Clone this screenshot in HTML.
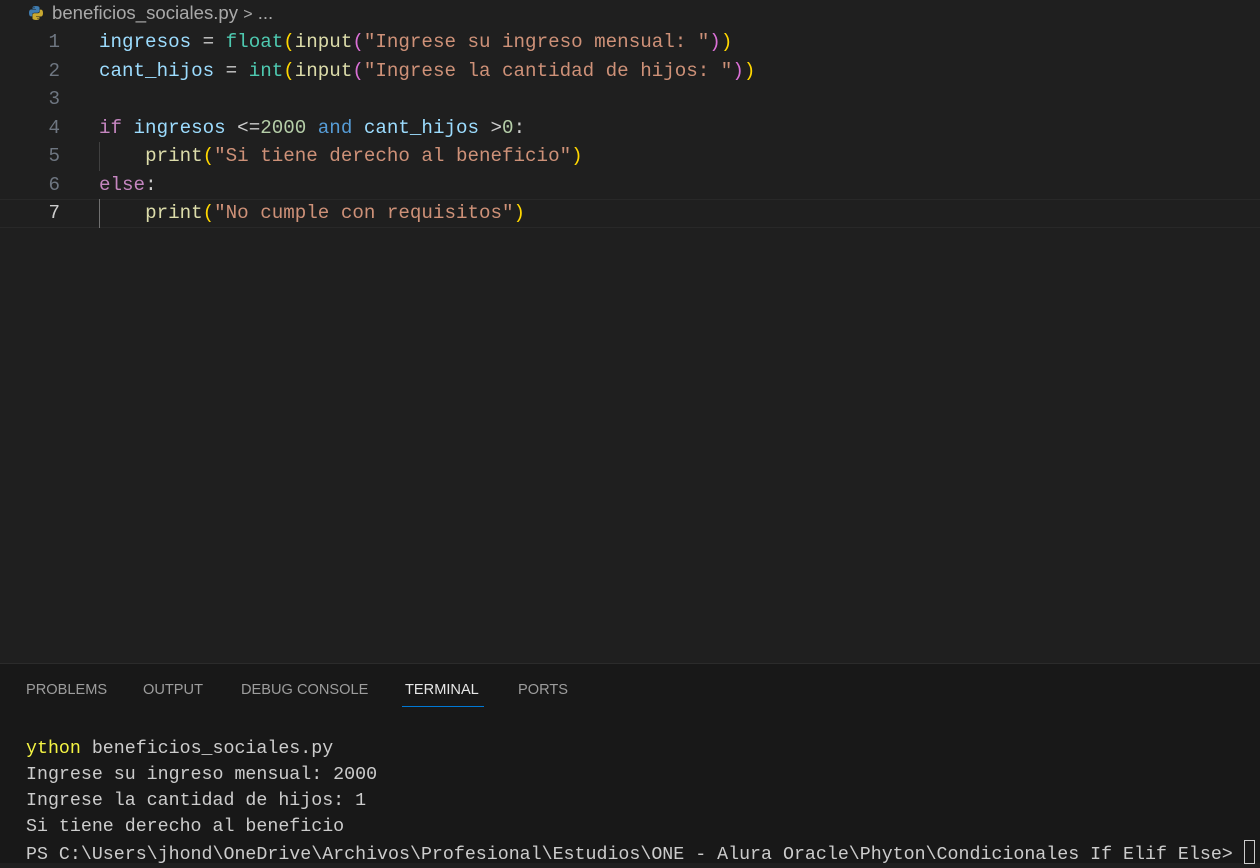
<!DOCTYPE html>
<html><head><meta charset="utf-8"><style>
body{margin:0;width:1260px;height:862px;background:#1f1f1f;overflow:hidden;font-family:"Liberation Sans",sans-serif;position:relative}
.bc{position:absolute;left:28px;top:0;height:26px;line-height:26px;color:#a9a9a9;font-size:18.6px}
.code{position:absolute;left:0;top:28px;width:1260px;font-family:"Liberation Mono",monospace;font-size:19.2px}
.ln{position:absolute;height:28.5px;line-height:28.5px;width:1260px}
.num{position:absolute;left:0;width:60px;text-align:right;color:#6e7681}
.tx{position:absolute;left:99px;white-space:pre;color:#cccccc}
.v{color:#9cdcfe}.f{color:#4ec9b0}.y{color:#ffd700}.p{color:#da70d6}.s{color:#ce9178}.k{color:#c586c0}.b{color:#569cd6}.n{color:#b5cea8}.fn{color:#dcdcaa}
.guide{position:absolute;left:99px;width:1px;background:#404040}
.panel{position:absolute;left:0;top:663px;width:1260px;height:199px;background:#181818;border-top:1px solid #2b2b2b}
.tabs{position:absolute;top:18px;left:26px;font-size:14.6px;color:#9d9d9d}
.tabs span{position:absolute;white-space:nowrap}
.term{position:absolute;left:26px;top:72px;font-family:"Liberation Mono",monospace;font-size:18.3px;color:#cccccc;white-space:pre}
.term div{height:26px;line-height:26px}
</style></head><body>
<div class="bc"><svg width="16" height="16" viewBox="0 0 16 16" style="vertical-align:-2px;margin-right:8px"><path d="M7.9 1C4.4 1 4.6 2.5 4.6 2.5V4h3.4v.5H3.3S1 4.2 1 7.9s2 3.5 2 3.5h1.2V9.7s-.1-2 2-2h3.4s1.9 0 1.9-1.9V2.9S11.8 1 7.9 1zM6 2.1a.6.6 0 110 1.2.6.6 0 010-1.2z" fill="#3f7cb0"/><path d="M8.1 15c3.5 0 3.3-1.5 3.3-1.5V12H8v-.5h4.7s2.3.3 2.3-3.4-2-3.5-2-3.5h-1.2v1.7s.1 2-2 2H6.4s-1.9 0-1.9 1.9v3.1S4.2 15 8.1 15zm1.9-1.1a.6.6 0 110-1.2.6.6 0 010 1.2z" fill="#c9a931"/></svg>beneficios_sociales.py <span style="font-size:16px">&gt;</span> ...</div>
<div class="code">
<div class="ln" style="top:0"><span class="num">1</span><span class="tx"><span class="v">ingresos</span> = <span class="f">float</span><span class="y">(</span><span class="fn">input</span><span class="p">(</span><span class="s">"Ingrese su ingreso mensual: "</span><span class="p">)</span><span class="y">)</span></span></div>
<div class="ln" style="top:28.5px"><span class="num">2</span><span class="tx"><span class="v">cant_hijos</span> = <span class="f">int</span><span class="y">(</span><span class="fn">input</span><span class="p">(</span><span class="s">"Ingrese la cantidad de hijos: "</span><span class="p">)</span><span class="y">)</span></span></div>
<div class="ln" style="top:57px"><span class="num">3</span></div>
<div class="ln" style="top:85.5px"><span class="num">4</span><span class="tx"><span class="k">if</span> <span class="v">ingresos</span> &lt;=<span class="n">2000</span> <span class="b">and</span> <span class="v">cant_hijos</span> &gt;<span class="n">0</span>:</span></div>
<div class="ln" style="top:114px"><span class="num">5</span><span class="tx">    <span class="fn">print</span><span class="y">(</span><span class="s">"Si tiene derecho al beneficio"</span><span class="y">)</span></span></div>
<div class="ln" style="top:142.5px"><span class="num">6</span><span class="tx"><span class="k">else</span>:</span></div>
<div class="ln" style="top:171px;border-top:1px solid #282828;border-bottom:1px solid #282828;box-sizing:border-box;left:0;width:1260px"></div>
<div class="ln" style="top:171px"><span class="num" style="color:#cccccc">7</span><span class="tx">    <span class="fn">print</span><span class="y">(</span><span class="s">"No cumple con requisitos"</span><span class="y">)</span></span></div>
<div class="guide" style="top:114px;height:28.5px"></div>
<div class="guide" style="top:171px;height:28.5px;background:#707070"></div>
</div>
<div class="panel">
<div class="tabs"><span style="left:0">PROBLEMS</span><span style="left:117px">OUTPUT</span><span style="left:215px">DEBUG CONSOLE</span><span style="left:379px;color:#e7e7e7">TERMINAL</span><span style="left:492px">PORTS</span></div>
<div style="position:absolute;left:402px;top:42px;width:82px;height:1px;background:#0078d4"></div>
<div class="term"><div><span style="color:#f5f543">ython</span> beneficios_sociales.py</div><div>Ingrese su ingreso mensual: 2000</div><div>Ingrese la cantidad de hijos: 1</div><div>Si tiene derecho al beneficio</div><div>PS C:\Users\jhond\OneDrive\Archivos\Profesional\Estudios\ONE - Alura Oracle\Phyton\Condicionales If Elif Else&gt; <span style="display:inline-block;width:9px;height:22px;border:1px solid #cccccc;vertical-align:-5px"></span></div></div>
</div>
</body></html>
